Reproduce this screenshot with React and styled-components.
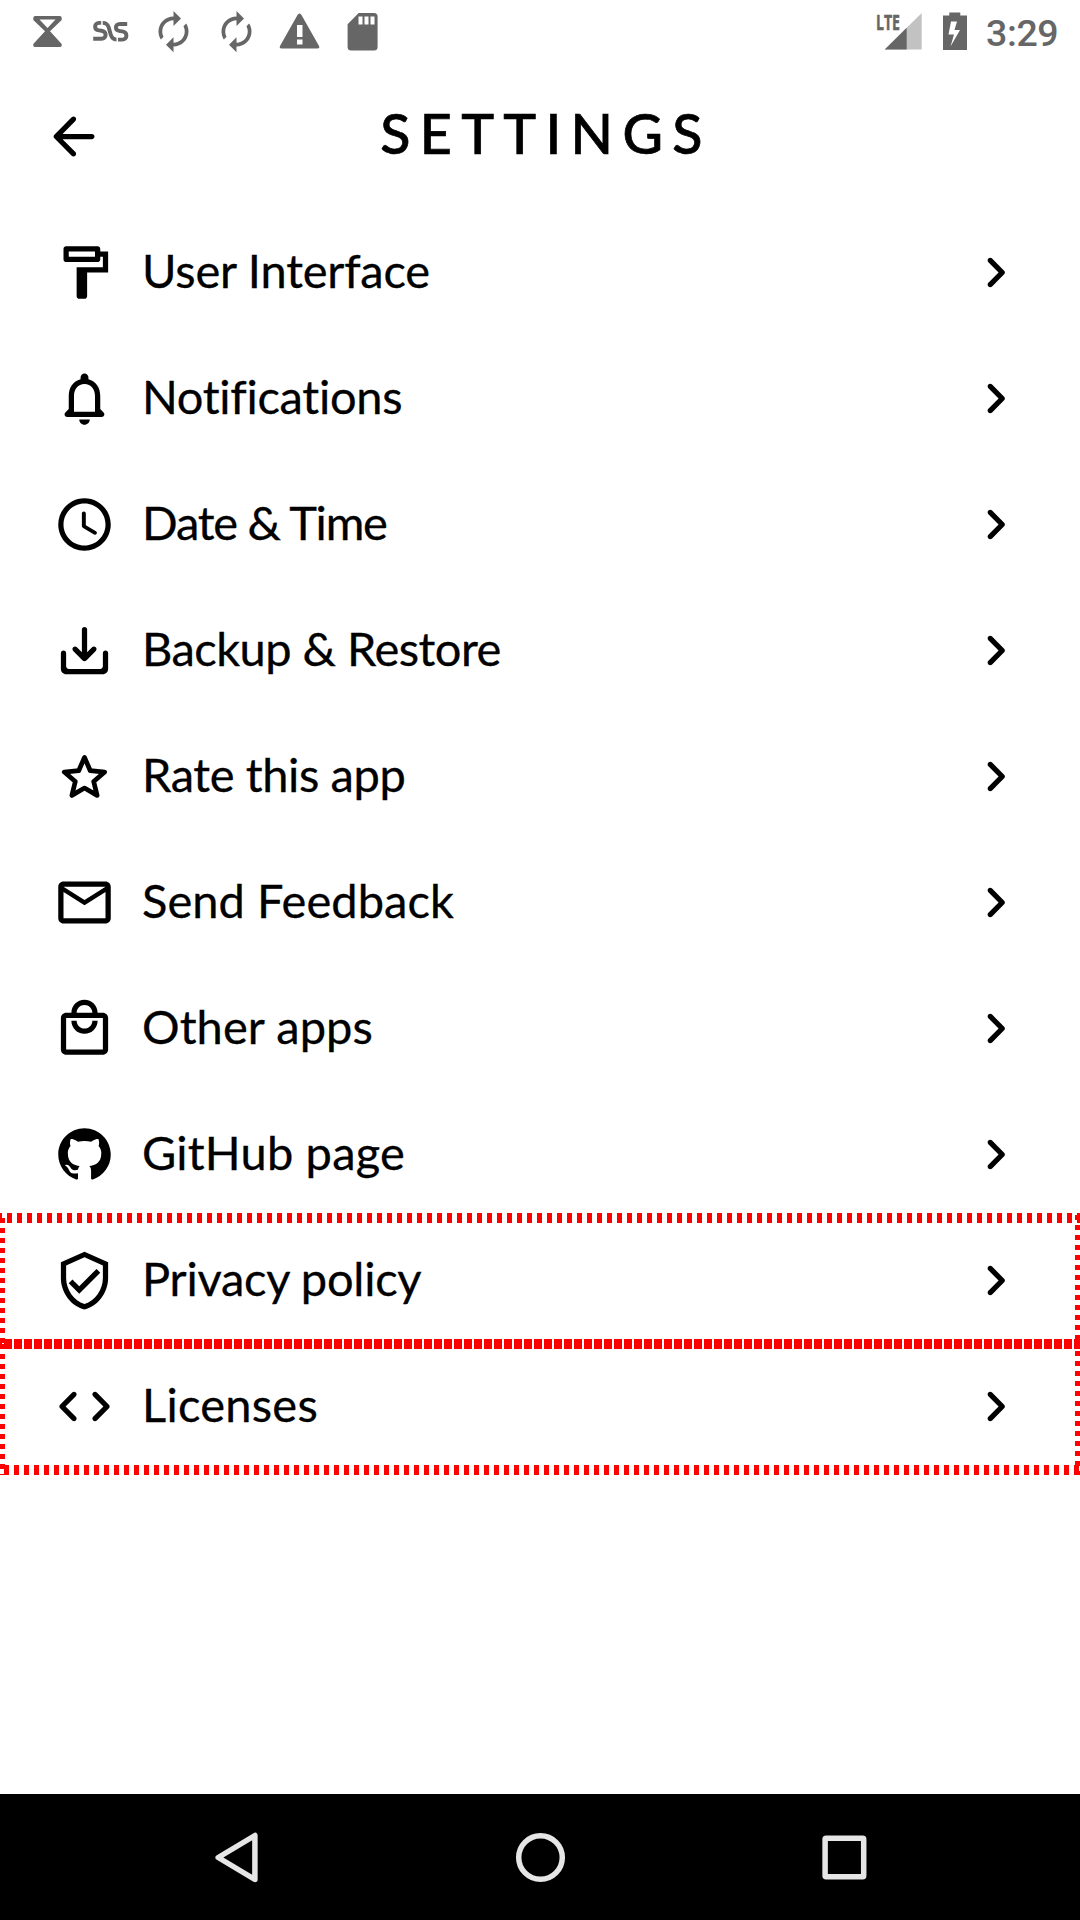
import React from "react";
import styled, { createGlobalStyle } from "styled-components";

const GlobalStyle = createGlobalStyle`
  *, *::before, *::after { box-sizing: border-box; }
  html, body { margin: 0; background: #fff; }
`;

const INK = "#000";
const STATUS = "#666";
const RED = "#f00";

const Screen = styled.div`
  display: flex;
  flex-direction: column;
  width: 1080px;
  height: 1920px;
  overflow: hidden;
  background: #fff;
  color: ${INK};
  font-family: Lato, "Open Sans", sans-serif;
`;

const StatusBar = styled.header`
  display: flex;
  align-items: center;
  justify-content: space-between;
  height: 63px;
  padding: 0 21px 0 25px;
  color: ${STATUS};
`;

const StatusGroup = styled.div`
  display: flex;
  align-items: center;
  gap: ${(p) => p.$gap}px;
`;

const StatusIcon = styled.svg`
  display: block;
  width: ${(p) => p.$w || 45}px;
  height: 45px;
  overflow: visible;
  fill: currentColor;
`;

const SignalLabel = styled.text`
  font: 700 22px "Open Sans", sans-serif;
  stroke: currentColor;
  stroke-width: 0.5px;
`;

const Clock = styled.time`
  width: 73px;
  margin-left: 3px;
  padding-top: 3px;
  font: 500 37.5px/45px Roboto, sans-serif;
  letter-spacing: -0.4px;
`;

const TitleBar = styled.div`
  display: grid;
  grid-template-columns: 63px 1fr 63px;
  align-items: center;
  height: 147px;
  padding: 0 42px;
`;

const Title = styled.h1`
  margin: 0;
  padding: 0 0 7px 12px;
  font-size: 55.5px;
  line-height: 64px;
  font-weight: 500;
  letter-spacing: 9.3px;
  text-align: center;
  -webkit-text-stroke: 0.7px currentColor;
`;

const Icon = styled.svg`
  display: block;
  flex: none;
  width: 63px;
  height: 63px;
  fill: currentColor;
`;

const List = styled.main`
  flex: 1;
`;

const Row = styled.div`
  position: relative;
  display: flex;
  align-items: center;
  height: 126px;
  padding: 0 53px 2px;

  &::after {
    content: "";
    display: ${(p) => (p.$marked ? "block" : "none")};
    position: absolute;
    inset: -5px 0;
    background:
      repeating-linear-gradient(90deg, ${RED} 0 2px, transparent 2px 7px, ${RED} 7px 10px) top / 100% 10px no-repeat,
      repeating-linear-gradient(90deg, transparent 0 4px, ${RED} 4px 9px, transparent 9px 10px) bottom / 100% 10px no-repeat,
      repeating-linear-gradient(180deg, transparent 0 5px, ${RED} 5px 10px) left / 5px 100% no-repeat,
      repeating-linear-gradient(180deg, transparent 0 2px, ${RED} 2px 7px, transparent 7px 10px) right / 5px 100% no-repeat;
  }
`;

const Label = styled.span`
  flex: 1;
  padding: 0 0 4px 26px;
  font-size: 47px;
  line-height: 60px;
  letter-spacing: ${(p) => p.$tracking}px;
  -webkit-text-stroke: 0.3px currentColor;
`;

const NavBar = styled.nav`
  display: flex;
  align-items: center;
  justify-content: center;
  gap: 240px;
  height: 126px;
  background: #000;
`;

const NavIcon = styled.svg`
  display: block;
  width: 63px;
  height: 63px;
  fill: none;
  stroke: #e6e6e6;
  stroke-width: 5.5;
  stroke-linejoin: round;
`;

const icons = {
  back: <path d="M19 11H7.83l4.88-4.88c.39-.39.39-1.03 0-1.42-.39-.39-1.02-.39-1.41 0l-6.59 6.59c-.39.39-.39 1.02 0 1.41l6.59 6.59c.39.39 1.02.39 1.41 0 .39-.39.39-1.02 0-1.41L7.83 13H19c.55 0 1-.45 1-1s-.45-1-1-1z" />,
  paint: <path d="M18 4V3c0-.55-.45-1-1-1H5c-.55 0-1 .45-1 1v4c0 .55.45 1 1 1h12c.55 0 1-.45 1-1V6h1v4H9v11c0 .55.45 1 1 1h2c.55 0 1-.45 1-1v-9h8V4h-3zM16 6H6V4h10z" fillRule="evenodd" />,
  bell: <path d="M12 22c1.1 0 2-.9 2-2h-4c0 1.1.9 2 2 2zm6-6v-5c0-3.07-1.63-5.64-4.5-6.32V4c0-.83-.67-1.5-1.5-1.5s-1.5.67-1.5 1.5v.68C7.64 5.36 6 7.92 6 11v5l-1.3 1.29c-.63.63-.19 1.71.7 1.71h13.17c.89 0 1.34-1.08.71-1.71L18 16zm-2 1H8v-6c0-2.48 1.51-4.5 4-4.5s4 2.02 4 4.5v6z" />,
  clock: <path d="M11.99 2C6.47 2 2 6.48 2 12s4.47 10 9.99 10C17.52 22 22 17.52 22 12S17.52 2 11.99 2zM12 20c-4.42 0-8-3.58-8-8s3.58-8 8-8 8 3.58 8 8-3.58 8-8 8zm-.22-13h-.06c-.4 0-.72.32-.72.72v4.72c0 .35.18.68.49.86l4.15 2.49c.34.2.78.1.98-.24.21-.34.1-.79-.25-.99l-3.87-2.3V7.72c0-.4-.32-.72-.72-.72z" />,
  backup: <path d="M19 13v5c0 .55-.45 1-1 1H6c-.55 0-1-.45-1-1v-5c0-.55-.45-1-1-1s-1 .45-1 1v6c0 1.1.9 2 2 2h14c1.1 0 2-.9 2-2v-6c0-.55-.45-1-1-1s-1 .45-1 1zm-6-.33l1.88-1.88c.39-.39 1.02-.39 1.41 0 .39.39.39 1.02 0 1.41l-3.59 3.59c-.39.39-1.02.39-1.41 0L7.7 12.2c-.39-.39-.39-1.02 0-1.41.39-.39 1.02-.39 1.41 0L11 12.67V4c0-.55.45-1 1-1s1 .45 1 1v8.67z" />,
  star: <path d="M12 4.7L14.2 9.8 19.7 10.3 15.5 13.9 16.8 19.2 12 16.4 7.2 19.2 8.5 13.9 4.3 10.3 9.8 9.8z" fill="none" stroke="currentColor" strokeWidth="1.8" strokeLinejoin="round" />,
  mail: <path d="M22 6c0-1.1-.9-2-2-2H4c-1.1 0-2 .9-2 2v12c0 1.1.9 2 2 2h16c1.1 0 2-.9 2-2V6zm-2 0l-8 5-8-5h16zm0 12H4V8l8 5 8-5v10z" />,
  bag: <path d="M19 6h-2c0-2.76-2.24-5-5-5S7 3.24 7 6H5c-1.1 0-1.99.9-1.99 2L3 20c0 1.1.9 2 2 2h14c1.1 0 2-.9 2-2V8c0-1.1-.9-2-2-2zm-7-3c1.66 0 3 1.34 3 3H9c0-1.66 1.34-3 3-3zm7 17H5V8h14v12zm-7-8c-1.66 0-3-1.34-3-3H7c0 2.76 2.24 5 5 5s5-2.24 5-5h-2c0 1.66-1.34 3-3 3z" />,
  github: <path transform="translate(2 2) scale(1.25)" d="M8 0C3.58 0 0 3.58 0 8c0 3.54 2.29 6.53 5.47 7.59.4.07.55-.17.55-.38 0-.19-.01-.82-.01-1.49-2.01.37-2.53-.49-2.69-.94-.09-.23-.48-.94-.82-1.13-.28-.15-.68-.52-.01-.53.63-.01 1.08.58 1.23.82.72 1.21 1.87.87 2.33.66.07-.52.28-.87.51-1.07-1.78-.2-3.64-.89-3.64-3.95 0-.87.31-1.59.82-2.15-.08-.2-.36-1.02.08-2.12 0 0 .67-.21 2.2.82.64-.18 1.32-.27 2-.27.68 0 1.36.09 2 .27 1.53-1.04 2.2-.82 2.2-.82.44 1.1.16 1.92.08 2.12.51.56.82 1.27.82 2.15 0 3.07-1.87 3.75-3.65 3.95.29.25.54.73.54 1.48 0 1.07-.01 1.93-.01 2.2 0 .21.15.46.55.38A8.013 8.013 0 0016 8c0-4.42-3.58-8-8-8z" />,
  shield: <path d="M12 1L3 5v6c0 5.55 3.84 10.74 9 12 5.16-1.26 9-6.45 9-12V5l-9-4zm7 10c0 4.52-2.98 8.69-7 9.93-4.02-1.24-7-5.41-7-9.93V6.3l7-3.11 7 3.11V11zm-11.59.59L6 13l4 4 8-8-1.41-1.42L10 14.17z" />,
  code: <path d="M8.7 15.9L4.8 12l3.9-3.9c.39-.39.39-1.01 0-1.4-.39-.39-1.01-.39-1.4 0l-4.59 4.59c-.39.39-.39 1.02 0 1.41l4.59 4.6c.39.39 1.01.39 1.4 0 .39-.39.39-1.01 0-1.4zm6.6 0l3.9-3.9-3.9-3.9c-.39-.39-.39-1.01 0-1.4.39-.39 1.01-.39 1.4 0l4.59 4.59c.39.39.39 1.02 0 1.41l-4.59 4.6c-.39.39-1.01.39-1.4 0-.39-.39-.39-1.01 0-1.4z" />,
  chevron: <path d="M9.29 6.71c-.39.39-.39 1.02 0 1.41L13.17 12l-3.88 3.88c-.39.39-.39 1.02 0 1.41.39.39 1.02.39 1.41 0l4.59-4.59c.39-.39.39-1.02 0-1.41L10.7 6.7c-.38-.38-1.02-.38-1.41.01z" />,
};

const rows = [
  { icon: "paint", label: "User Interface", tracking: -0.19 },
  { icon: "bell", label: "Notifications", tracking: -0.3 },
  { icon: "clock", label: "Date & Time", tracking: -1.23 },
  { icon: "backup", label: "Backup & Restore", tracking: -0.52 },
  { icon: "star", label: "Rate this app", tracking: -0.39 },
  { icon: "mail", label: "Send Feedback", tracking: 0.05 },
  { icon: "bag", label: "Other apps", tracking: 0.1 },
  { icon: "github", label: "GitHub page", tracking: 0.19 },
  { icon: "shield", label: "Privacy policy", tracking: -0.25, marked: true },
  { icon: "code", label: "Licenses", tracking: 0.25, marked: true },
];

const Symbol = ({ name }) => (
  <Icon viewBox="0 0 24 24" aria-hidden="true">{icons[name]}</Icon>
);

const Sync = () => (
  <StatusIcon viewBox="0 0 24 24">
    <path d="M12 6v3l4-4-4-4v3c-4.42 0-8 3.58-8 8 0 1.57.46 3.03 1.24 4.26L6.7 14.8c-.45-.83-.7-1.79-.7-2.8 0-3.31 2.69-6 6-6zm6.76 1.74L17.3 9.2c.44.84.7 1.79.7 2.8 0 3.31-2.69 6-6 6v-3l-4 4 4 4v-3c4.42 0 8-3.58 8-8 0-1.57-.46-3.03-1.24-4.26z" />
  </StatusIcon>
);

export default function App() {
  return (
    <Screen>
      <GlobalStyle />
      <StatusBar>
        <StatusGroup $gap={18}>
          <StatusIcon viewBox="0 0 45 45">
            <path d="M8.3 9q0-2 2-2h24.4q2 0 2 2v2L25 22.3 36.7 35v1.5q0 1.5-2 1.5H10.3q-2 0-2-1.5V35L20 22.3 8.3 11zM14.5 10.5L22.5 19l8-8.5z" fillRule="evenodd" />
          </StatusIcon>
          <StatusIcon viewBox="0 0 45 45">
            <g fill="none" stroke="currentColor" strokeWidth="3.9">
              <path d="M13.2 13.9H11c-5.200 0-5.200 7 0 7.500l2.500.3c5.500.7 5.500 8 0 8H5.200" />
              <path d="M14.700 13.900c3.600 0 5 1.500 6 4.500l2 7.200c.9 3 2.300 5 5.800 5" />
              <path d="M39.200 15H32c-5.500 0-5.500 6.600 0 7.100l2.300.3c5.500.7 5.500 8.200 0 8.200H30" />
            </g>
          </StatusIcon>
          <Sync />
          <Sync />
          <StatusIcon viewBox="0 0 45 45">
            <path d="M22.5 4.5q1.2 0 2 1.500l17.500 31q1 2.500-1.500 2.500h-36q-2.500 0-1.500-2.500L20.500 6q.8-1.500 2-1.500zM20 16v12h5.500V16zm0 14.500v5h5.500v-5z" fillRule="evenodd" />
          </StatusIcon>
          <StatusIcon viewBox="0 0 45 45">
            <path d="M18.700 4h15.300q3.600 0 3.600 3.600v30.300q0 3.600-3.600 3.600H11.200q-3.600 0-3.600-3.600V15.200zM18.500 7.500v8h4v-8zm6 0v8h4v-8zm6 0v8h4v-8z" fillRule="evenodd" />
          </StatusIcon>
        </StatusGroup>
        <StatusGroup $gap={0}>
          <StatusIcon viewBox="0 0 48 45" $w={48}>
            <path d="M46.700 4v36.500H9.700z" fill="#c2c2c2" />
            <path d="M31.700 18.800v21.700H9.700z" />
            <path d="M0 0H27V22.500H0z" fill="#fff" />
            <SignalLabel x="1" y="20.500" textLength="24" lengthAdjust="spacingAndGlyphs">LTE</SignalLabel>
          </StatusIcon>
          <StatusIcon viewBox="0 0 60 45" $w={60}>
            <path d="M26.300 3.500h11v3h6.700v34.500H20V6.500h6.300zM28 12.500l-2.500 13h5.500L27.500 37.500 37 21h-5.500l2.500-8.500z" fillRule="evenodd" />
          </StatusIcon>
          <Clock>3:29</Clock>
        </StatusGroup>
      </StatusBar>
      <TitleBar>
        <Symbol name="back" />
        <Title>SETTINGS</Title>
      </TitleBar>
      <List>
        {rows.map((row) => (
          <Row key={row.icon} $marked={row.marked}>
            <Symbol name={row.icon} />
            <Label $tracking={row.tracking}>{row.label}</Label>
            <Symbol name="chevron" />
          </Row>
        ))}
      </List>
      <NavBar>
        <NavIcon viewBox="0 0 63 63"><path d="M48.900 9.500v44L12.200 31.500z" /></NavIcon>
        <NavIcon viewBox="0 0 63 63"><circle cx="31.500" cy="31.500" r="21.800" /></NavIcon>
        <NavIcon viewBox="0 0 63 63"><rect x="13.100" y="12.200" width="38.600" height="38.600" rx="1" /></NavIcon>
      </NavBar>
    </Screen>
  );
}
